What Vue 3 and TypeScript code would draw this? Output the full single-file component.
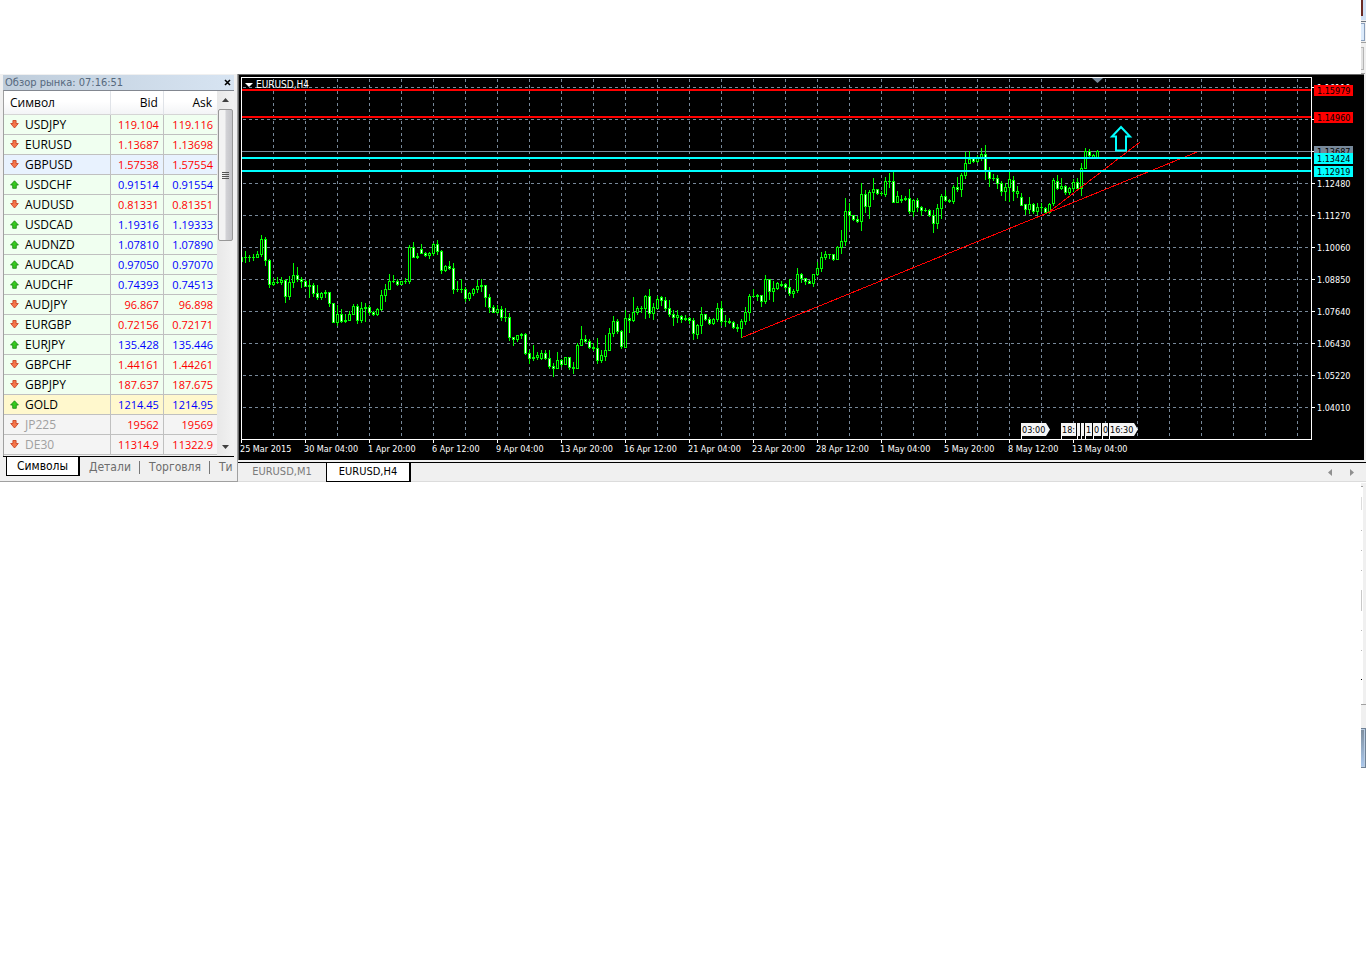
<script setup lang="ts">
import { ref } from 'vue'

type Direction = 'up' | 'down'

interface Quote {
  symbol: string
  bid: string
  ask: string
  dir: Direction
  tone?: string
}

interface Candle {
  x: number
  high: number
  top: number
  bottom: number
  low: number
  bear: boolean
}

const quotes: Quote[] = [
  { symbol: 'USDJPY', bid: '119.104', ask: '119.116', dir: 'down' },
  { symbol: 'EURUSD', bid: '1.13687', ask: '1.13698', dir: 'down' },
  { symbol: 'GBPUSD', bid: '1.57538', ask: '1.57554', dir: 'down', tone: 'selected' },
  { symbol: 'USDCHF', bid: '0.91514', ask: '0.91554', dir: 'up' },
  { symbol: 'AUDUSD', bid: '0.81331', ask: '0.81351', dir: 'down' },
  { symbol: 'USDCAD', bid: '1.19316', ask: '1.19333', dir: 'up' },
  { symbol: 'AUDNZD', bid: '1.07810', ask: '1.07890', dir: 'up' },
  { symbol: 'AUDCAD', bid: '0.97050', ask: '0.97070', dir: 'up' },
  { symbol: 'AUDCHF', bid: '0.74393', ask: '0.74513', dir: 'up' },
  { symbol: 'AUDJPY', bid: '96.867', ask: '96.898', dir: 'down' },
  { symbol: 'EURGBP', bid: '0.72156', ask: '0.72171', dir: 'down' },
  { symbol: 'EURJPY', bid: '135.428', ask: '135.446', dir: 'up' },
  { symbol: 'GBPCHF', bid: '1.44161', ask: '1.44261', dir: 'down' },
  { symbol: 'GBPJPY', bid: '187.637', ask: '187.675', dir: 'down' },
  { symbol: 'GOLD', bid: '1214.45', ask: '1214.95', dir: 'up', tone: 'gold' },
  { symbol: 'JP225', bid: '19562', ask: '19569', dir: 'down', tone: 'idle' },
  { symbol: 'DE30', bid: '11314.9', ask: '11322.9', dir: 'down', tone: 'idle' },
]

const marketTabs = ['Символы', 'Детали', 'Торговля', 'Ти']
const chartTabs = ['EURUSD,M1', 'EURUSD,H4']
const marketTab = ref('Символы')
const chartTab = ref('EURUSD,H4')

// One entry per bar: high, body top, body bottom, low; a trailing "b" marks a bearish bar.
const series = `
257 257 262 262|251 257 258 263|255 257 258 262|254 257 258 261|251 254 258 258|235 239 255 257|237 239 261 266 b|259 260 285 288 b
278 282 285 286|277 282 283 284|277 280 283 285|279 280 297 303 b|276 282 297 300|263 275 283 288|267 275 280 282 b|277 279 282 288 b
280 281 287 287 b|280 285 287 298|283 285 294 297 b|285 293 298 300 b|292 293 298 300|290 292 294 298|292 292 304 307 b|303 303 323 323 b
305 314 323 326|309 314 322 323 b|314 320 322 323|311 314 321 321|304 306 315 315|304 306 321 324 b|302 308 321 323|303 307 309 322
305 307 313 315 b|311 312 315 316 b|308 309 315 316|290 295 310 311|284 289 296 302|274 281 290 290|275 281 282 283|279 281 285 286 b
281 281 285 285|278 281 282 284|245 247 282 284|242 247 258 258 b|253 256 258 259|244 249 254 254 b|252 253 256 257 b|252 253 256 259
243 244 254 256|240 244 252 255 b|250 251 271 274 b|265 266 271 272|261 266 269 270 b|263 268 290 294 b|281 289 290 292|279 289 290 293
287 289 299 302 b|292 293 299 301|288 289 294 296|280 286 290 293|279 285 287 292|285 285 298 307 b|294 297 308 313 b|305 307 313 313 b
305 309 313 314|306 309 318 321 b|308 317 318 322|313 317 338 341 b|337 337 340 346 b|335 335 340 342|333 334 336 339|333 334 354 355 b
350 353 359 364 b|345 357 359 361|352 355 358 360|350 353 359 360|350 353 359 360 b|350 358 367 369 b|363 366 369 377 b|352 360 369 369
359 360 365 367 b|357 357 365 365|357 357 368 370 b|362 367 369 374|343 345 369 369|326 339 346 346|335 339 342 343 b|339 341 348 349 b
343 347 349 351|338 348 361 364 b|350 355 361 363|335 350 357 361|328 333 351 351|316 321 334 337|319 321 332 334 b|330 331 347 349 b
310 318 348 348|314 318 321 333 b|297 312 321 322|306 308 313 315|306 308 309 313|295 296 309 319|289 296 314 318 b|303 307 314 320
296 299 309 309|296 297 301 306 b|297 300 309 311 b|300 308 315 317 b|310 314 318 326 b|310 315 318 323|315 316 320 323 b|315 318 320 321
317 318 321 324 b|318 320 334 340 b|324 325 335 339|307 314 326 334|314 314 320 321 b|317 319 324 325 b|318 319 324 325|303 308 320 322
301 308 322 326 b|315 321 322 327|318 321 323 324|321 322 328 329 b|324 327 329 332 b|319 321 329 338|307 312 322 325|294 296 313 321
289 296 297 297|294 295 297 301 b|295 295 302 307 b|275 279 302 304|279 279 292 300 b|281 288 292 302|282 283 289 290|281 284 286 287
283 284 288 290 b|279 287 294 296 b|289 291 294 298|268 274 291 293|273 274 279 283 b|278 278 282 285 b|280 281 284 284 b|274 274 284 287
262 268 275 276|252 257 269 272|251 254 258 260|254 254 255 259|254 254 260 261 b|246 247 260 260|230 241 248 254|198 211 242 246
203 211 216 230 b|215 215 220 221 b|216 219 222 223 b|183 194 222 231|190 194 207 213 b|190 192 207 219|178 189 193 200|189 189 194 195 b
191 193 194 196|177 181 195 197|173 181 182 188|171 181 203 203 b|191 196 203 203|195 199 201 203|196 198 200 201|189 198 212 214 b
199 200 212 217|198 200 208 212 b|206 207 211 216 b|208 210 211 212|209 210 216 217 b|210 215 224 233 b|204 208 224 229|194 196 209 219
190 196 201 202 b|199 200 202 203|185 187 202 204|177 187 190 192 b|173 175 190 197|152 163 176 179|151 159 164 164|157 158 162 163 b
155 157 162 163|148 154 159 161|145 154 171 180 b|167 171 179 187 b|174 178 179 181|175 178 184 189 b|181 183 192 196 b|183 187 192 201
172 179 188 202|176 180 192 201 b|186 191 194 198|193 197 206 206 b|204 204 210 215 b|197 204 210 214|203 204 212 214 b|203 207 212 215
203 207 208 212|207 208 213 214 b|203 204 213 214|178 180 204 206|175 181 189 190 b|178 186 189 190|185 186 193 195 b|187 188 193 195
179 182 189 192|178 182 189 191 b|163 168 189 196|148 151 169 169|149 151 156 159 b|154 155 158 159|150 151 158 158`

const candles: Candle[] = series
  .trim()
  .split(/[|\n]/)
  .map((entry, i) => {
    const [high, top, bottom, low, kind] = entry.split(' ')
    return { x: 241 + i * 4, high: +high, top: +top, bottom: +bottom, low: +low, bear: kind === 'b' }
  })

const gridX = Array.from({ length: 33 }, (_, i) => 273 + i * 32)
const gridY = [87, 119, 183, 215, 247, 279, 311, 343, 375, 407]

const prices = ['1.16110', '1.14900', '1.13690', '1.12480', '1.11270', '1.10060', '1.08850', '1.07640', '1.06430', '1.05220', '1.04010']
  .map((text, i) => ({ text, y: 87 + i * 32 }))
  // A scale value is left out where a level tag fully covers it.
  .map((p) => ({ ...p, hidden: p.y === 119 || p.y === 151 }))

const dates = ['25 Mar 2015', '30 Mar 04:00', '1 Apr 20:00', '6 Apr 12:00', '9 Apr 04:00', '13 Apr 20:00', '16 Apr 12:00',
  '21 Apr 04:00', '23 Apr 20:00', '28 Apr 12:00', '1 May 04:00', '5 May 20:00', '8 May 12:00', '13 May 04:00']
  .map((text, i) => ({ text, x: 241 + i * 64 }))

const levels = [
  { y: 90, color: '#ff0000' },
  { y: 117, color: '#ff0000' },
  { y: 158, color: '#00ffff' },
  { y: 171, color: '#00ffff' },
]

const tags = [
  { y: 85, text: '1.15979', color: '#ff0000' },
  { y: 112, text: '1.14960', color: '#ff0000' },
  { y: 146, text: '1.13687', color: '#778899' },
  { y: 153, text: '1.13424', color: '#00ffff' },
  { y: 166, text: '1.12919', color: '#00ffff' },
]

const events = [
  { x: 1021, w: 29, text: '03:00', tip: true },
  { x: 1061, w: 15, text: '18:', tip: false },
  { x: 1077, w: 3, text: '', tip: false },
  { x: 1081, w: 3, text: '', tip: false },
  { x: 1085, w: 7, text: '1', tip: false },
  { x: 1093, w: 8, text: '0', tip: false },
  { x: 1102, w: 6, text: '0', tip: false },
  { x: 1109, w: 29, text: '16:30', tip: true },
]

function flag(x: number, w: number, tip: boolean): string {
  return tip
    ? `M${x} 423h${w - 4}l4 6.5l-4 6.5h${4 - w}z`
    : `M${x} 423h${w}v13h${-w}z`
}
</script>

<template>
  <div class="page">
    <div class="edge-band top">
      <svg width="5" height="74" viewBox="0 0 5 74" aria-hidden="true">
        <rect width="5" height="20" fill="#cfe0f5" />
        <rect width="2" height="16" fill="#6b2a24" />
        <rect y="20" width="5" height="54" fill="#f0f0f0" />
        <rect y="21" width="5" height="1" fill="#6d7680" />
        <rect y="23" width="4" height="18" fill="#8ba0bc" />
        <rect y="24" width="3" height="16" fill="#dcebfb" />
        <rect y="42" width="5" height="1" fill="#a0a0a0" />
        <rect y="47" width="3" height="23" fill="#b4b4b4" />
        <rect y="48" width="2" height="21" fill="#e2e2e2" />
        <rect y="73" width="4" height="1" fill="#a0a0a0" />
      </svg>
    </div>

    <main class="workspace">
      <section class="market" aria-label="Обзор рынка">
        <header class="market-title">
          <span>Обзор рынка: 07:16:51</span>
          <button type="button" class="close" aria-label="Закрыть">
            <svg width="7" height="7" viewBox="0 0 7 7"><path d="M1 1l5 5M6 1l-5 5" stroke="#000" stroke-width="1.6" /></svg>
          </button>
        </header>

        <div class="market-body">
          <table class="quotes">
            <thead>
              <tr><th scope="col">Символ</th><th scope="col">Bid</th><th scope="col">Ask</th></tr>
            </thead>
            <tbody>
              <tr v-for="q in quotes" :key="q.symbol" :class="q.tone">
                <td class="symbol">
                  <svg width="9" height="9" viewBox="0 0 9 9" aria-hidden="true">
                    <path v-if="q.dir === 'down'" d="M2.9 .5h3.2v3h2.2L4.5 8 .7 3.5h2.2z" fill="#f4764a" stroke="#c83c1c" stroke-width=".8" />
                    <path v-else d="M4.5 .8L8.4 5H6.3v3.3H2.7V5H.6z" fill="#35c81d" stroke="#15870f" stroke-width=".8" />
                  </svg>
                  <span>{{ q.symbol }}</span>
                </td>
                <td :class="['price', q.dir]">{{ q.bid }}</td>
                <td :class="['price', q.dir]">{{ q.ask }}</td>
              </tr>
            </tbody>
          </table>
          <div class="scroll">
            <button type="button" aria-label="Вверх"><svg width="7" height="4" viewBox="0 0 7 4"><path d="M0 4L3.5 0 7 4z" fill="#404040" /></svg></button>
            <div class="thumb"><i></i><i></i><i></i><i></i></div>
            <button type="button" class="last" aria-label="Вниз"><svg width="7" height="4" viewBox="0 0 7 4"><path d="M0 0L3.5 4 7 0z" fill="#404040" /></svg></button>
          </div>
        </div>

        <nav class="market-tabs">
          <button v-for="t in marketTabs" :key="t" type="button" :class="{ active: t === marketTab }" @click="marketTab = t">{{ t }}</button>
        </nav>
      </section>

      <section class="chart" aria-label="EURUSD,H4">
        <svg class="plot" viewBox="238 74 1128 388" role="img" aria-label="EURUSD,H4">
          <rect x="238" y="74" width="1128" height="388" fill="#f0f0f0" />
          <rect x="238" y="74" width="1126" height="386" fill="#696969" />
          <rect x="239" y="75" width="1125" height="385" fill="#000" />

          <g stroke="#778899" stroke-width="1" stroke-dasharray="3 3" shape-rendering="crispEdges">
            <line v-for="x in gridX" :key="'x' + x" :x1="x + 0.5" :x2="x + 0.5" y1="79" y2="439" />
            <line v-for="y in gridY" :key="'y' + y" x1="243" x2="1311" :y1="y + 0.5" :y2="y + 0.5" />
          </g>

          <rect x="241" y="151" width="1070" height="1" fill="#778899" />

          <g shape-rendering="crispEdges">
            <g v-for="c in candles" :key="c.x">
              <rect :x="c.x" :y="c.high" width="1" :height="c.low - c.high" fill="#00ff00" />
              <rect :x="c.x - 1" :y="c.top" width="3" :height="c.bottom - c.top" fill="#00ff00" />
              <rect v-if="c.bottom - c.top > 2" :x="c.x" :y="c.top + 1" width="1" :height="c.bottom - c.top - 2" :fill="c.bear ? '#fff' : '#000'" />
            </g>
          </g>

          <g fill="none" stroke="#ff0000" stroke-width="1" shape-rendering="crispEdges">
            <path d="M742 337.5L1197 152" />
            <path d="M1049 212L1140 142" />
          </g>
          <path d="M1121 127L1130 136.500H1126V150.500H1116V136.500H1112Z" fill="none" stroke="#00ffff" stroke-width="2" />

          <rect v-for="l in levels" :key="l.y" x="241" :y="l.y - 1" width="1070" height="2" :fill="l.color" />

          <g v-for="e in events" :key="e.x">
            <rect :x="e.x" y="423" width="1" height="16" fill="#fff" />
            <path :d="flag(e.x, e.w, e.tip)" fill="#f5f5f5" />
            <text v-if="e.text" :x="e.x + 1" y="433" class="label dark">{{ e.text }}</text>
          </g>

          <rect x="239" y="77" width="2" height="363" fill="#000" />
          <path d="M241.500 443V77.500H1311.500V439.500H241" fill="none" stroke="#fff" shape-rendering="crispEdges" />
          <path d="M1092 78h11l-5.500 5z" fill="#778899" />
          <path d="M245 83h8l-4 4z" fill="#fff" />
          <text x="256" y="88" class="label name">EURUSD,H4</text>

          <g v-for="p in prices" :key="p.text">
            <rect x="1312" :y="p.y" width="3" height="1" fill="#fff" />
            <text v-if="!p.hidden" x="1317" :y="p.y + 4" class="label">{{ p.text }}</text>
          </g>
          <g v-for="t in tags" :key="t.text">
            <rect x="1314" :y="t.y" width="39" height="11" :fill="t.color" />
            <text x="1317" :y="t.y + 9" class="label dark">{{ t.text }}</text>
          </g>
          <g v-for="d in dates" :key="d.text">
            <rect :x="d.x" y="440" width="1" height="3" fill="#fff" />
            <text :x="d.x - 1" y="452" class="label">{{ d.text }}</text>
          </g>
        </svg>

        <nav class="chart-tabs">
          <button v-for="t in chartTabs" :key="t" type="button" :class="{ active: t === chartTab }" @click="chartTab = t">{{ t }}</button>
          <span class="pager">
            <button type="button" aria-label="Назад"><svg width="4" height="7" viewBox="0 0 4 7"><path d="M4 0L0 3.500 4 7z" fill="#909090" /></svg></button>
            <button type="button" aria-label="Вперёд"><svg width="4" height="7" viewBox="0 0 4 7"><path d="M0 0L4 3.500 0 7z" fill="#909090" /></svg></button>
          </span>
        </nav>
      </section>
    </main>

    <div class="edge-band">
      <svg width="5" height="288" viewBox="0 0 5 288" aria-hidden="true">
        <defs>
          <linearGradient id="edge-thumb" x1="0" y1="0" x2="0" y2="1">
            <stop offset="0" stop-color="#7f8f9f" />
            <stop offset="1" stop-color="#a9c6ea" />
          </linearGradient>
        </defs>
        <rect y="1" width="5" height="245" fill="#f0f0f0" />
        <rect y="4" width="2" height="218" fill="#fff" />
        <rect y="4" width="2" height="1" fill="#a0a0a0" />
        <rect y="15" width="1" height="13" fill="#dcdcdc" />
        <rect v-for="y in [48, 68, 88, 148, 168]" :key="y" :y="y" width="1" height="1" fill="#b8b8b8" />
        <rect y="108" width="1" height="21" fill="#c8c8c8" />
        <rect y="197" width="1" height="1" fill="#000" />
        <rect y="222" width="5" height="1" fill="#a0a0a0" />
        <rect y="246" width="5" height="40" fill="#6f8195" />
        <rect y="247" width="4" height="38" fill="#b9cde3" />
        <rect y="248" width="3" height="36" fill="url(#edge-thumb)" />
      </svg>
    </div>
  </div>
</template>

<style>
body {
  margin: 0;
  background: #fff;
}
</style>

<style scoped>
.page {
  width: 100%;
  font-family: "DejaVu Sans Condensed", "DejaVu Sans", "Open Sans", sans-serif;
}

button {
  margin: 0;
  padding: 0;
  border: 0;
  background: none;
  font: inherit;
  color: inherit;
}

svg {
  display: block;
}

.edge-band {
  display: flex;
  justify-content: flex-end;
}

.workspace {
  display: flex;
  align-items: stretch;
}

.market {
  box-sizing: border-box;
  flex: 0 0 238px;
  min-width: 0;
  display: flex;
  flex-direction: column;
  padding: 1px 3px 0;
  background: #f0f0f0;
  border-right: 1px solid #a0a0a0;
  border-bottom: 1px solid #a0a0a0;
}

.market-title {
  display: flex;
  align-items: center;
  justify-content: space-between;
  height: 15px;
  padding: 0 2px;
  background: linear-gradient(90deg, #bfcddb, #d7e4f2);
  color: #56697d;
  font-size: 11px;
  line-height: 15px;
  white-space: nowrap;
}

.close {
  display: grid;
  place-items: center;
  width: 10px;
  height: 13px;
}

.market-body {
  display: flex;
  height: 366px;
  overflow: hidden;
  box-sizing: border-box;
  border-top: 1px solid #828790;
  border-left: 1px solid #a0a0a0;
}

.quotes {
  flex: 1;
  height: 364px;
  border-collapse: separate;
  border-spacing: 0;
  table-layout: fixed;
  font-family: "Open Sans", "Noto Sans", sans-serif;
}

.quotes th {
  width: 53px;
  height: 24px;
  box-sizing: border-box;
  padding: 0 5px 0 0;
  border-right: 1px solid #e0e3e8;
  border-bottom: 1px solid #d5d5d5;
  background: linear-gradient(#fff 45%, #f3f4f6);
  font-size: 12px;
  font-weight: 400;
  line-height: 20px;
  text-align: right;
}

.quotes th:first-child {
  width: 106px;
  padding: 0 0 0 6px;
  text-align: left;
}

.quotes td {
  height: 20px;
  box-sizing: border-box;
  padding: 0 4px 0 0;
  border-right: 1px solid #c0c0c0;
  border-bottom: 1px solid #c0c0c0;
  background: #f0fff0;
  font-size: 12px;
  line-height: 18px;
}

.quotes th:last-child,
.quotes td:last-child {
  border-right: 0;
}

.quotes .symbol {
  padding-left: 6px;
}

.symbol svg {
  display: inline-block;
  margin-right: 6px;
}

.quotes .price {
  font-size: 11px;
  text-align: right;
}

.quotes tr.selected td {
  background: #e8f2fe;
}

.quotes tr.gold td {
  background: #fff8cd;
}

.quotes tr.idle td {
  background: #f4f4f4;
}

.price.down {
  color: #f00;
}

.price.up {
  color: #00f;
}

.idle .symbol span {
  color: #a0a0a0;
}

.scroll {
  display: flex;
  flex: 0 0 17px;
  flex-direction: column;
  align-items: center;
  background: linear-gradient(90deg, #e8e8e8, #f2f2f2);
}

.scroll button {
  display: grid;
  place-items: center;
  width: 100%;
  height: 18px;
}

.scroll .last {
  margin-top: auto;
}

.thumb {
  display: flex;
  flex-direction: column;
  justify-content: center;
  gap: 1px;
  align-items: center;
  box-sizing: border-box;
  width: 15px;
  height: 132px;
  border: 1px solid #979797;
  border-radius: 2px;
  background: linear-gradient(90deg, #f3f3f3 45%, #d2d2d6 55%, #c3c3c7);
}

.thumb i {
  width: 7px;
  height: 1px;
  background: #555;
}

.market-tabs {
  display: flex;
  height: 24px;
  overflow: hidden;
  border-top: 1px solid #000;
  color: #6d6d6d;
  font-size: 12px;
  line-height: 18px;
  white-space: nowrap;
}

.market-tabs button {
  flex-shrink: 0;
  box-sizing: border-box;
  height: 19px;
  padding: 0 9px;
  background: linear-gradient(#777, #777) right 4px / 1px 13px no-repeat;
}

.market-tabs button:last-child {
  background: none;
}

.market-tabs .active {
  width: 74px;
  height: 19px;
  margin-left: 3px;
  padding: 0;
  border: 1px solid #000;
  border-top: 0;
  border-right-width: 2px;
  background: #fff;
  color: #000;
}

.chart {
  flex: 1;
  min-width: 0;
  background: #f0f0f0;
}

.plot {
  width: 100%;
  height: auto;
}

.label {
  fill: #fff;
  font-size: 9px;
}

.label.name {
  font-size: 10px;
}

.label.dark {
  fill: #000;
}

.chart-tabs {
  display: flex;
  box-sizing: border-box;
  height: 20px;
  border-top: 1px solid #000;
  border-bottom: 1px solid #dcdcdc;
  color: #7a7a7a;
  font-size: 11px;
  line-height: 18px;
}

.chart-tabs > button {
  width: 88px;
}

.chart-tabs > .active {
  box-sizing: border-box;
  width: 85px;
  height: 19px;
  border: 1px solid #000;
  border-top: 0;
  border-right-width: 2px;
  background: #fff;
  color: #000;
}

.pager {
  display: flex;
  gap: 18px;
  align-items: center;
  margin-left: auto;
  padding-right: 12px;
}
</style>
